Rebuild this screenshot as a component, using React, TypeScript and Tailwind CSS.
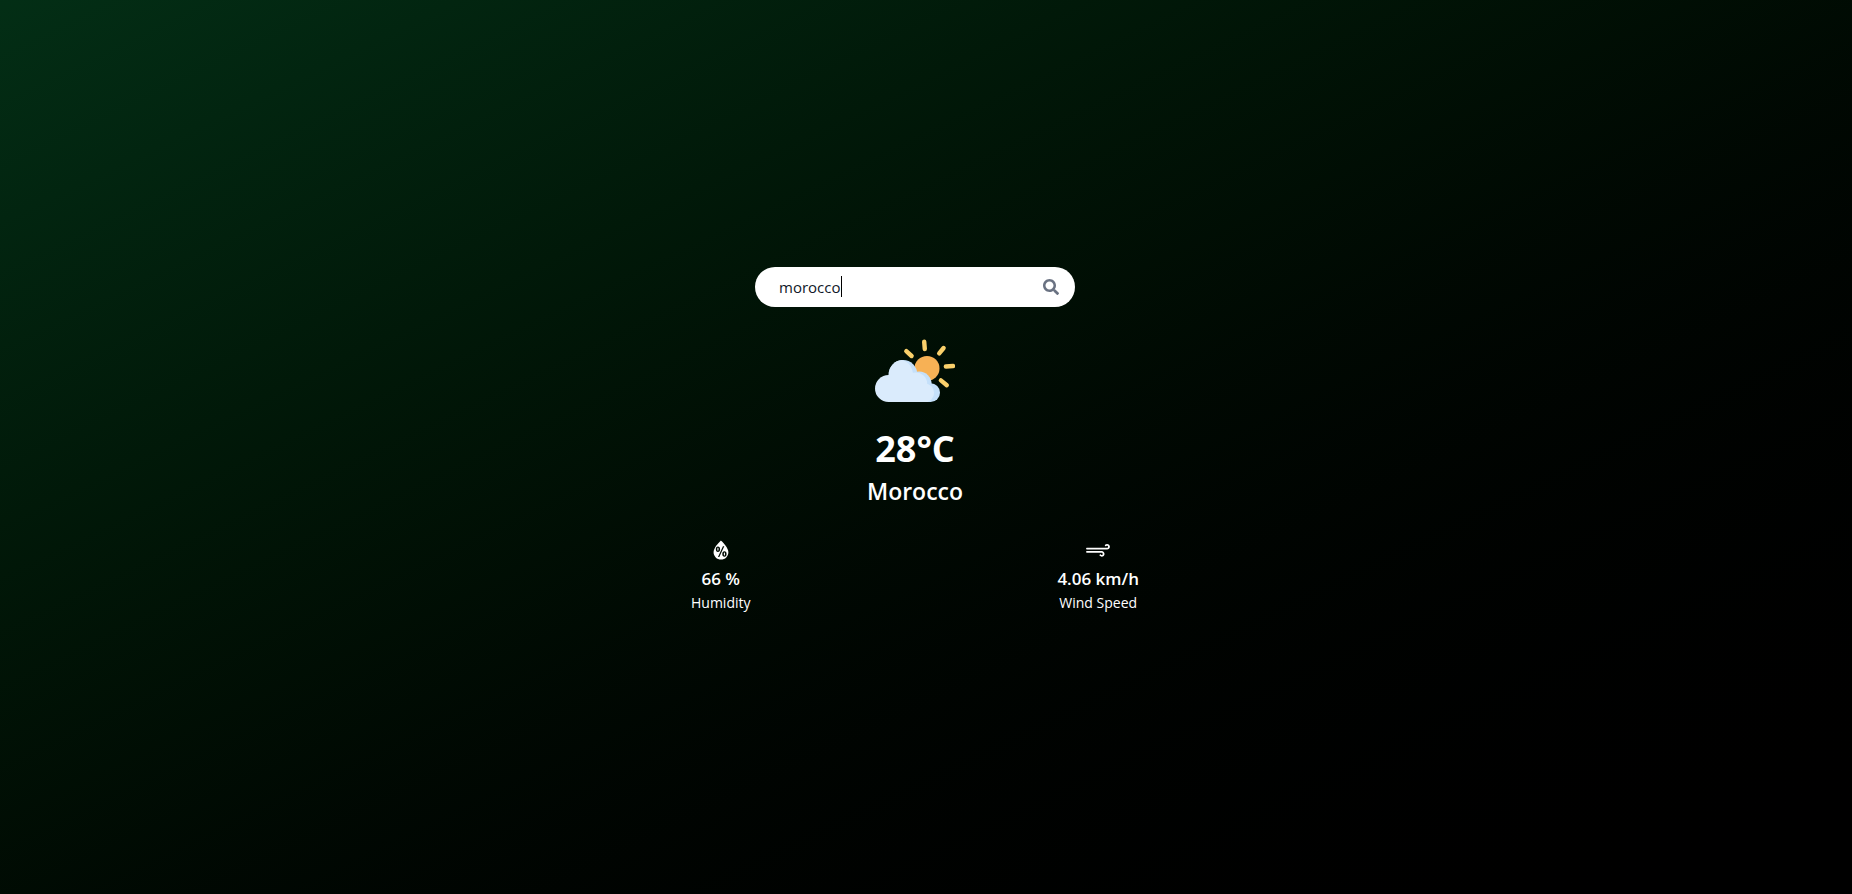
import { useState } from "react";
import type { ReactNode } from "react";
import { FaSearch } from "react-icons/fa";
import { WiHumidity, WiStrongWind } from "react-icons/wi";

function PartlyCloudy() {
  return (
    <svg viewBox="0 0 80 80" className="size-20" role="img" aria-label="Partly cloudy">
      <g stroke="#fad06b" strokeWidth="4.4" strokeLinecap="round">
        <path d="M31.3 20.2 36.6 25" />
        <path d="M49.2 10.8 49.8 18" />
        <path d="M68.6 17 64.2 22.4" />
        <path d="M70.9 35.5 78 35" />
        <path d="M65.9 49.4 71.8 54.2" />
      </g>
      <circle cx="52" cy="37.4" r="12.5" fill="#f7b155" />
      <g fill="#c5e0fa">
        <circle cx="28" cy="43.4" r="14.3" />
        <circle cx="44.2" cy="53" r="12.4" />
        <circle cx="55.6" cy="61.7" r="9.4" />
        <path d="M13.5 50H50L55.6 60V71.1H13.5Z" />
      </g>
      <g fill="#daebfc">
        <circle cx="13.6" cy="57.5" r="13.6" />
        <path d="M27 29.1A14.3 14.3 0 0 0 13.7 43.4V60H38V42.4C37 35.5 33 30.5 27 29.1Z" />
        <circle cx="40.6" cy="53" r="11.6" />
        <circle cx="49.8" cy="61.8" r="9.3" />
        <path d="M13.5 50H45L49.8 60V71.1H13.5Z" />
      </g>
    </svg>
  );
}

function Stat({ icon, value, label }: { icon: ReactNode; value: string; label: string }) {
  return (
    <div className="flex flex-col items-center">
      {icon}
      <p className="text-[17px] leading-7 font-semibold">{value}</p>
      <p className="text-sm leading-5">{label}</p>
    </div>
  );
}

export default function App() {
  const [city, setCity] = useState("morocco");

  return (
    <main className="flex min-h-screen flex-col items-center justify-center bg-linear-to-br from-green-950 to-black pr-[22px] pb-3.5 font-['Open_Sans',sans-serif] text-white">
      <form
        className="relative flex h-10 w-80 items-center rounded-full bg-white pr-4 pl-6 text-gray-900"
        onSubmit={(event) => event.preventDefault()}
      >
        <input
          type="text"
          aria-label="City"
          value={city}
          onChange={(event) => setCity(event.target.value)}
          className="min-w-0 flex-1 bg-transparent text-[15px] leading-6 outline-none"
        />
        <span aria-hidden="true" className="absolute top-[9px] left-[86px] h-[21px] w-px bg-black" />
        <button type="submit" aria-label="Search" className="text-gray-500">
          <FaSearch className="size-4" />
        </button>
      </form>

      <section className="mt-6 flex w-full max-w-md flex-col items-center">
        <PartlyCloudy />
        <h1 className="mt-[18px] text-4xl leading-10 font-bold">28°C</h1>
        <h2 className="mt-1.5 text-[23px] leading-8 font-semibold">Morocco</h2>
        <div className="mt-7 flex w-full justify-between">
          <Stat icon={<WiHumidity className="size-[30px]" />} value="66 %" label="Humidity" />
          <Stat icon={<WiStrongWind className="size-[30px]" />} value="4.06 km/h" label="Wind Speed" />
        </div>
      </section>
    </main>
  );
}
